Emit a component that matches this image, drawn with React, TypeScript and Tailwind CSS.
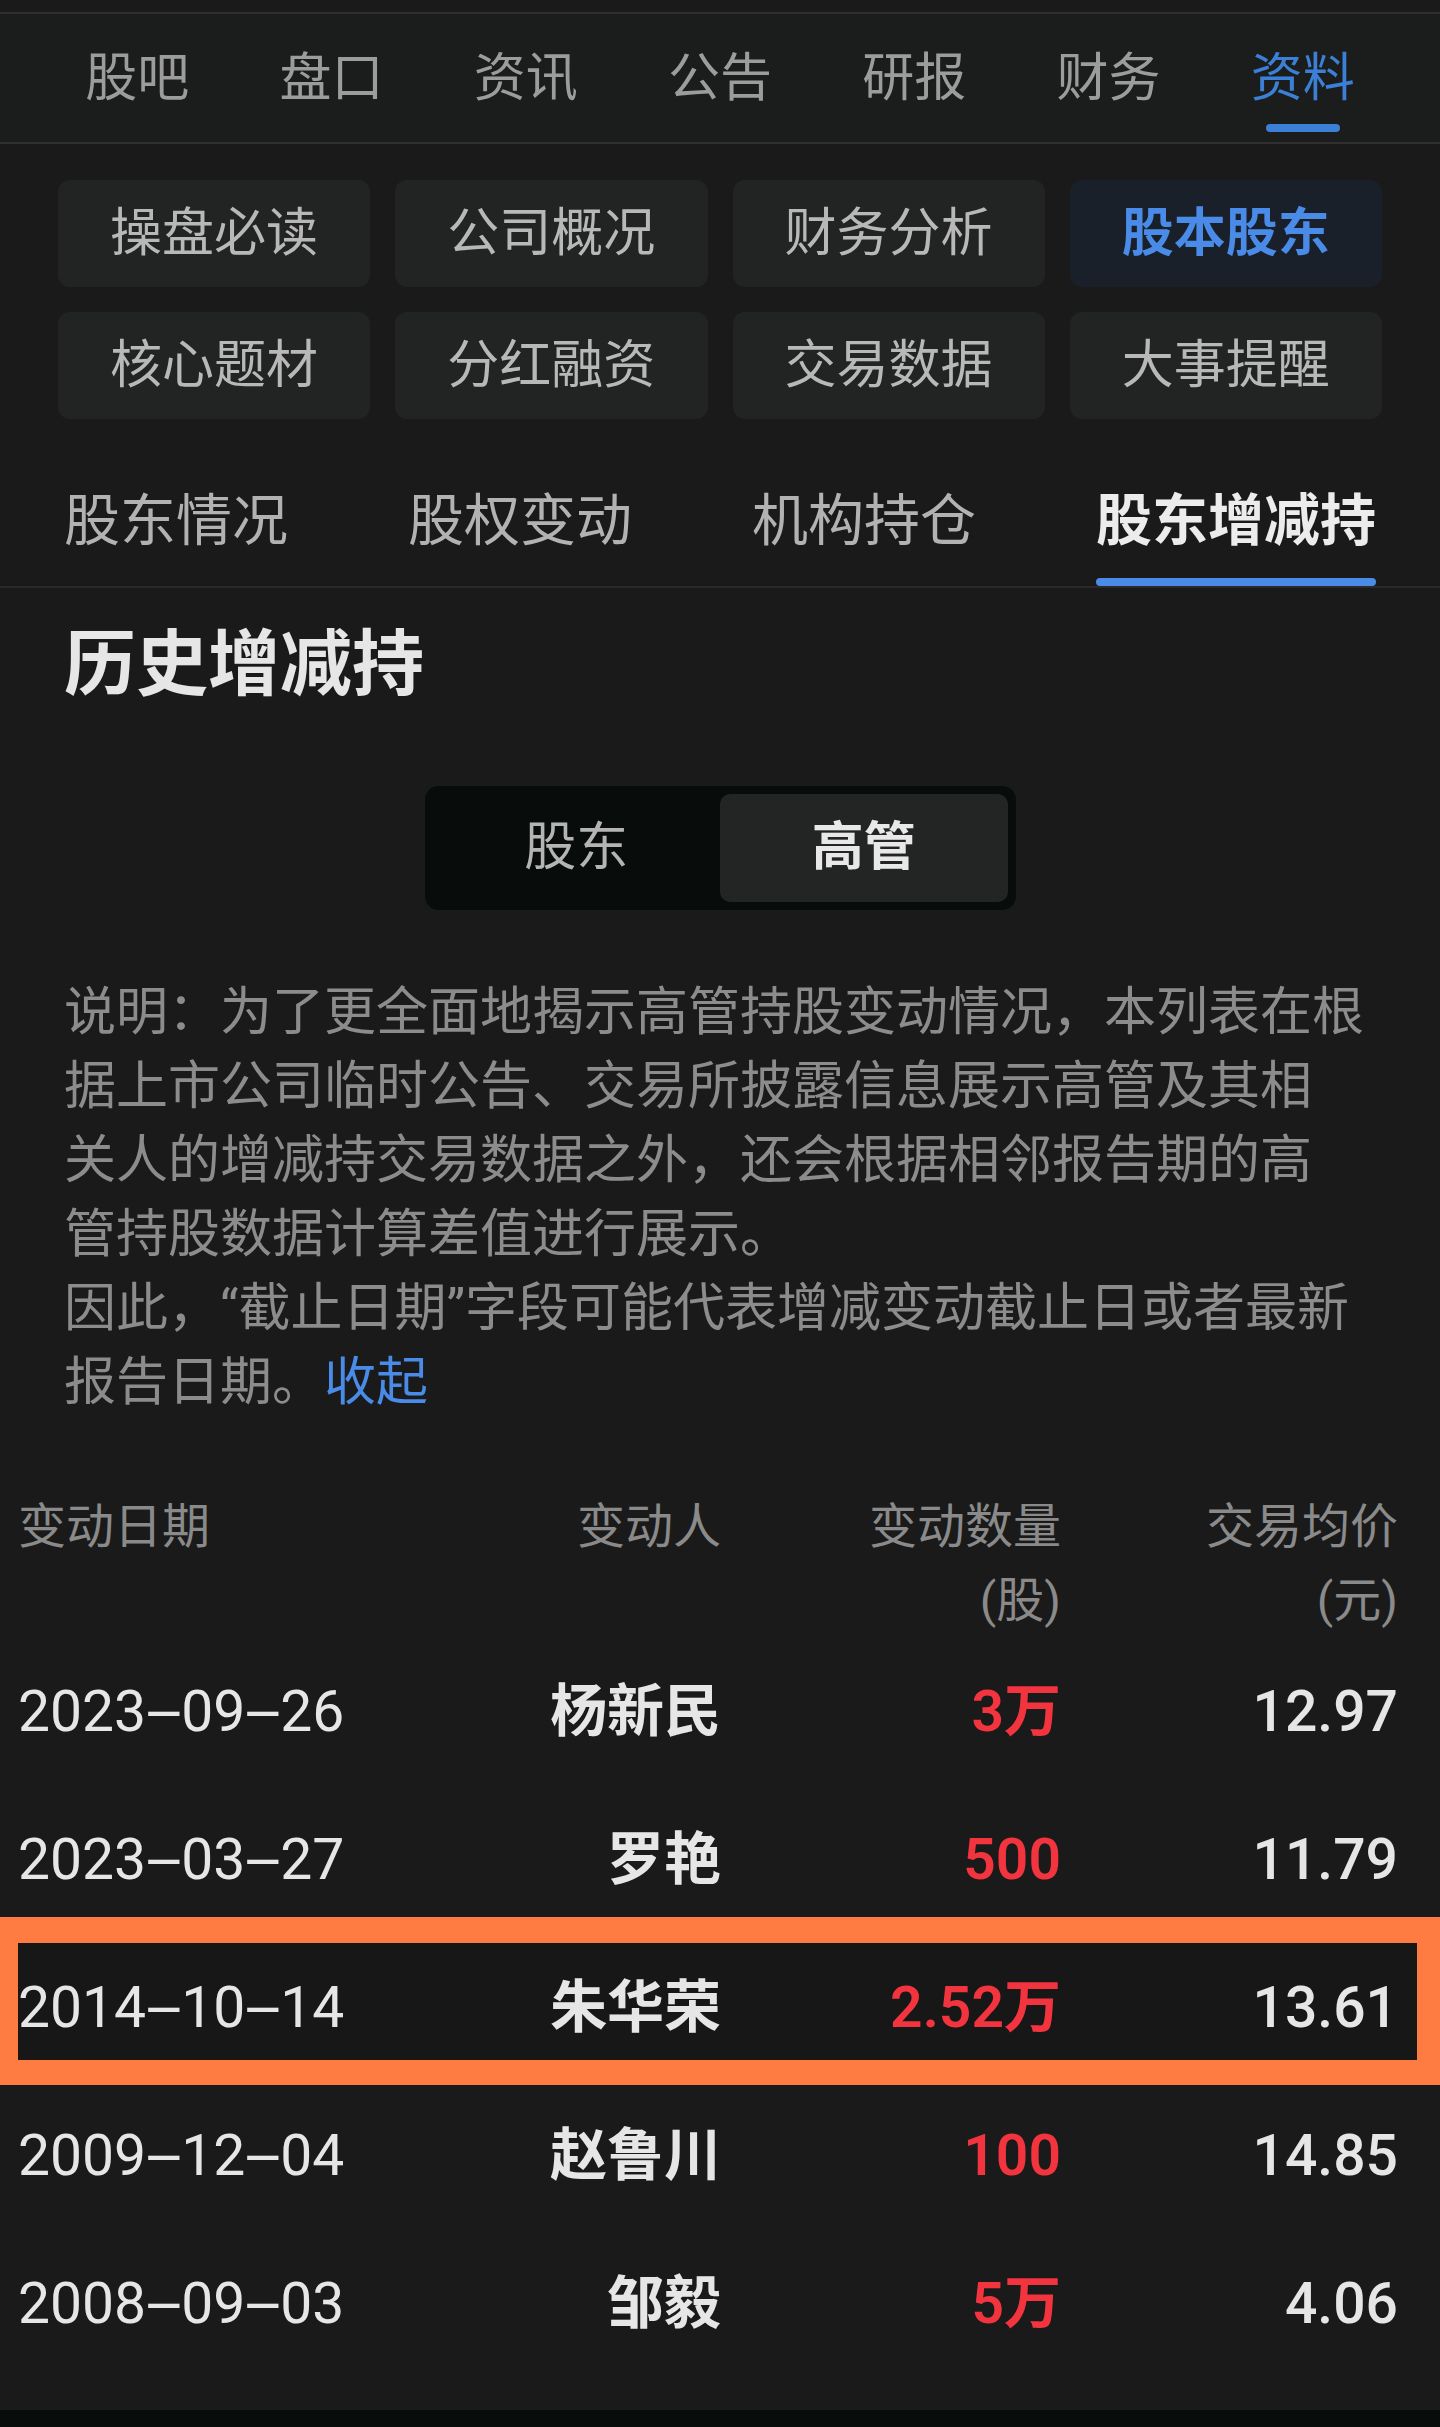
const navs = ["股吧", "盘口", "资讯", "公告", "研报", "财务", "资料"]

const tiles = [
  "操盘必读",
  "公司概况",
  "财务分析",
  "股本股东",
  "核心题材",
  "分红融资",
  "交易数据",
  "大事提醒",
]

const subs = ["股东情况", "股权变动", "机构持仓", "股东增减持"]

const rows = [
  { date: "2023-09-26", name: "杨新民", amount: "3万", price: "12.97" },
  { date: "2023-03-27", name: "罗艳", amount: "500", price: "11.79" },
  { date: "2014-10-14", name: "朱华荣", amount: "2.52万", price: "13.61", marked: true },
  { date: "2009-12-04", name: "赵鲁川", amount: "100", price: "14.85" },
  { date: "2008-09-03", name: "邹毅", amount: "5万", price: "4.06" },
]

function DateText({ value }: { value: string }) {
  const parts = value.split("-")
  return (
    <>
      {parts.map((p, i) => (
        <span key={i}>
          {i > 0 && (
            <span className="inline-block w-[35px] text-center">
              <span className="inline-block scale-x-[2.3]">-</span>
            </span>
          )}
          {p}
        </span>
      ))}
    </>
  )
}

export default function App() {
  return (
    <div className="min-h-[2427px] bg-[#1a1a1a] flex flex-col font-[family-name:Roboto,'Noto_Sans_CJK_SC',sans-serif]">
      <div className="h-[12px]" />

      {/* top tabs */}
      <nav className="flex h-[132px] border-y-2 border-[#2f2f2f] bg-[#1b1d1c] px-[40px]">
        {navs.map((n) => {
          const active = n === "资料"
          return (
            <div key={n} className="flex-1 flex flex-col items-center pt-[37px]">
              <span
                className={
                  active
                    ? "text-[52px] leading-[56px] text-[#3b80d6]"
                    : "text-[52px] leading-[56px] text-[#9c9c9c]"
                }
              >
                {n}
              </span>
              {active && <div className="mt-[17px] h-[8px] w-[74px] rounded-full bg-[#3b80d6]" />}
            </div>
          )
        })}
      </nav>

      {/* section tiles */}
      <div className="mt-[36px] grid grid-cols-4 gap-[25px] px-[58px]">
        {tiles.map((t) => {
          const active = t === "股本股东"
          return (
            <div
              key={t}
              className={
                active
                  ? "h-[107px] rounded-[12px] bg-[#19202a] flex items-center justify-center text-[52px] font-bold text-[#4a8be8]"
                  : "h-[107px] rounded-[12px] bg-[#222423] flex items-center justify-center text-[52px] text-[#b8b8b8]"
              }
            >
              {t}
            </div>
          )
        })}
      </div>

      {/* sub tabs */}
      <div className="mt-[72px] flex justify-between border-b-2 border-[#2a2a2a] px-[64px]">
        {subs.map((s) => {
          const active = s === "股东增减持"
          return (
            <div key={s} className="flex flex-col">
              <span
                className={
                  active
                    ? "text-[56px] leading-[60px] font-bold text-[#ececec]"
                    : "text-[56px] leading-[60px] text-[#b2b2b2]"
                }
              >
                {s}
              </span>
              <div
                className={
                  active
                    ? "mt-[27px] h-[8px] w-full rounded-full bg-[#4a8be8]"
                    : "mt-[27px] h-[8px] w-full"
                }
              />
            </div>
          )
        })}
      </div>

      <h1 className="mt-[37px] px-[64px] text-[72px] leading-[80px] font-bold text-[#e6e6e6]">
        历史增减持
      </h1>

      {/* 股东 / 高管 */}
      <div className="mt-[81px] self-center grid grid-cols-2 w-[591px] h-[124px] p-[8px] rounded-[14px] bg-[#080c0a]">
        <div className="flex items-center justify-center text-[52px] text-[#b4b4b4]">股东</div>
        <div className="flex items-center justify-center rounded-[10px] bg-[#222523] text-[52px] font-bold text-[#e8e8e8]">
          高管
        </div>
      </div>

      <p className="mt-[66px] px-[64px] text-[52px] leading-[74px] text-[#8c8c8c] whitespace-nowrap">
        说明：为了更全面地揭示高管持股变动情况，本列表在根
        <br />
        据上市公司临时公告、交易所披露信息展示高管及其相
        <br />
        关人的增减持交易数据之外，还会根据相邻报告期的高
        <br />
        管持股数据计算差值进行展示。
        <br />
        因此，“截止日期”字段可能代表增减变动截止日或者最新
        <br />
        报告日期。<span className="text-[#4a8be8]">收起</span>
      </p>

      {/* table */}
      <div className="mt-[70px] grid grid-cols-[420px_283px_340px_337px] pl-[18px] pr-[42px] text-[48px] leading-[74px] text-[#8a8a8a]">
        <div>变动日期</div>
        <div className="text-right">变动人</div>
        <div className="text-right">
          变动数量
          <br />
          (股)
        </div>
        <div className="text-right">
          交易均价
          <br />
          (元)
        </div>
      </div>

      <div className="flex flex-col">
        {rows.map((r) => (
          <div
            key={r.date}
            className="relative grid grid-cols-[420px_283px_340px_337px] items-center h-[148px] pl-[18px] pr-[42px] text-[57px] text-[#e6e6e6]"
          >
            {r.marked && (
              <div className="absolute inset-x-0 -top-[17px] -bottom-[3px] border-[#fe7b42] border-t-[26px] border-b-[25px] border-l-[18px] border-r-[23px] bg-[#171717]" />
            )}
            <div className="relative">
              <DateText value={r.date} />
            </div>
            <div className="relative text-right font-bold">{r.name}</div>
            <div className="relative text-right font-semibold text-[#f2343f]">{r.amount}</div>
            <div className="relative text-right font-medium">{r.price}</div>
          </div>
        ))}
      </div>

      <div className="mt-auto h-[17px] bg-[#080c0a]" />
    </div>
  )
}
